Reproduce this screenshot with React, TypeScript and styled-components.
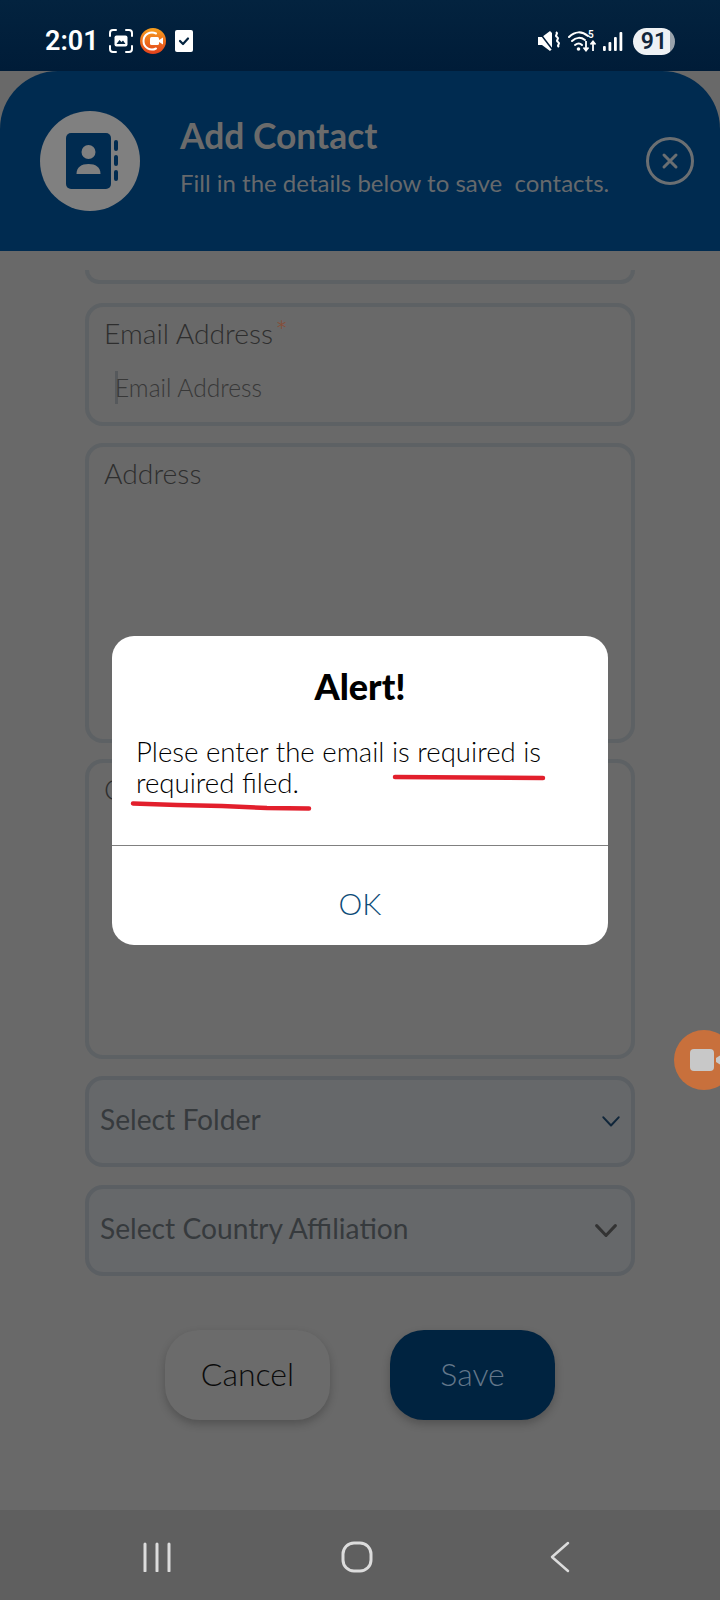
import React from "react";
import styled, { createGlobalStyle } from "styled-components";

const Global = createGlobalStyle`
  html, body { margin: 0; padding: 0; background: #696969; }
  * { box-sizing: border-box; }
`;
const Screen = styled.div`
  position: relative; width: 720px; height: 1600px; overflow: hidden;
  display: flex; flex-direction: column; background: #696969;
  font-family: "Lato", "Liberation Sans", sans-serif;
`;
const StatusBar = styled.div`
  height: 71px; flex: none; display: flex; align-items: center; justify-content: space-between;
  padding: 11px 45px 0 45px; background: linear-gradient(#03233f, #001c38);
`;
const StatusGroup = styled.div`display: flex; align-items: center;`;
const Clock = styled.span`
  font: 600 27px "Roboto", sans-serif; color: #fff; margin-right: 12px; width: 52px;
`;
const Battery = styled.div`
  width: 42px; height: 27px; border-radius: 14px; display: flex; align-items: center; justify-content: center;
  background: linear-gradient(90deg, #eef1f4 88%, #9aa3ac 88%);
  font: 600 23px "Roboto", sans-serif; color: #12263b; margin-left: 10px;
`;
const Header = styled.header`
  height: 180px; flex: none; background: #002b50; border-radius: 58px 58px 0 0;
  display: flex; align-items: flex-start; padding: 40px 26px 0 40px; position: relative;
`;
const Avatar = styled.div`
  width: 100px; height: 100px; border-radius: 50%; background: #808080; flex: none;
  display: flex; align-items: center; justify-content: center;
`;
const HeaderText = styled.div`
  margin-left: 40px; flex: 1; display: flex; flex-direction: column;
`;
const Title = styled.h1`
  margin: 4px 0 0; font: 700 35.4px/42px "Lato", sans-serif; color: #6b6b6b;
`;
const Subtitle = styled.p`
  margin: 11px 0 0; font: 400 24px/30px "Lato", sans-serif; color: #66696c; white-space: pre;
`;
const Close = styled.div`
  width: 48px; height: 48px; border-radius: 50%; border: 3px solid #6b6f72; flex: none; margin-top: 26px;
  display: flex; align-items: center; justify-content: center;
`;
const Form = styled.main`
  flex: 1; min-height: 0; display: flex; flex-direction: column; padding: 0 85px;
`;
const Field = styled.div<{ $h: number; $mt: number; $cut?: boolean }>`
  height: ${(p) => p.$h}px; margin-top: ${(p) => p.$mt}px; flex: none;
  border: 4px solid #5d6164; border-radius: 18px; padding: 9px 14px 0 15px;
  ${(p) => p.$cut && "border-top: 0; border-radius: 0 0 18px 18px;"}
`;
const Label = styled.div`
  font: 300 28.3px/34px "Lato", sans-serif; color: #2e2e2e; position: relative; width: max-content;
`;
const Star = styled.span`
  position: absolute; left: 100%; top: -3px; margin-left: 2px; font-size: 30px; color: #8a4b32;
`;
const InputRow = styled.div`
  display: flex; align-items: center; margin: 21px 0 0 11px; height: 33px;
`;
const Caret = styled.span`width: 3px; height: 33px; background: #56595c; flex: none;`;
const Placeholder = styled.span`
  font: 300 24.6px/33px "Lato", sans-serif; color: #383838; margin-left: -3px;
`;
const SelectField = styled.div<{ $mt: number; $chevRight: number }>`
  height: 91px; margin-top: ${(p) => p.$mt}px; flex: none;
  border: 4px solid #5b5f63; border-radius: 18px; background: #66686a;
  display: flex; align-items: center; justify-content: space-between;
  padding: 0 ${(p) => p.$chevRight}px 0 11px;
`;
const SelectText = styled.span`
  font: 400 28.2px/34px "Lato", sans-serif; color: #363a3d; margin-top: -5px;
`;
const Buttons = styled.div`
  display: flex; justify-content: center; gap: 60px; margin-top: 54px;
`;
const Button = styled.button<{ $primary?: boolean }>`
  width: 165px; height: 90px; border: 0; border-radius: 34px; padding: 0 0 4px;
  font: 300 32px "Lato", sans-serif;
  background: ${(p) => (p.$primary ? "#002340" : "#6b6b6b")};
  color: ${(p) => (p.$primary ? "#63778a" : "#0b0b0b")};
  box-shadow: 0 4px 8px rgba(0,0,0,.22);
`;
const NavBar = styled.nav`
  height: 90px; flex: none; background: #5f5f5f; display: flex; align-items: center;
  justify-content: space-between; padding: 3px 150px 0 143px;
`;
const Dialog = styled.div`
  position: absolute; left: 112px; top: 636px; width: 496px; height: 309px; border-radius: 22px;
  background: #fff; display: flex; flex-direction: column;
`;
const DialogTitle = styled.h2`
  margin: 28px 0 0; text-align: center; font: 900 36px/44px "Lato", sans-serif; color: #000;
`;
const DialogBody = styled.p`
  margin: 28px 0 0; padding: 0 24px; font: 300 27.6px/31px "Lato", sans-serif; color: #000;
  height: 80px;
`;
const Divider = styled.div`height: 1px; background: #808080; margin-top: 29px; flex: none;`;
const OkRow = styled.div`
  flex: 1; display: flex; align-items: center; justify-content: center;
  font: 300 30px "Lato", sans-serif; color: #0c4b78; padding-top: 14px;
`;
const Ink = styled.svg`
  position: absolute; left: 0; top: 0; width: 496px; height: 309px; overflow: visible; pointer-events: none;
`;
const Float = styled.div`
  position: absolute; left: 674px; top: 1030px; width: 60px; height: 60px; border-radius: 50%; background: #c8703c;
  display: flex; align-items: center; padding-left: 16px;
`;

const Chevron = ({ size, stroke, color }: { size: number; stroke: number; color: string }) => (
  <svg width={size} height={size * 0.62} viewBox="0 0 20 12.4" fill="none">
    <path d="M1.5 1.5 L10 10.5 L18.5 1.5" stroke={color} strokeWidth={(stroke * 20) / size} strokeLinecap="round" strokeLinejoin="round" />
  </svg>
);

export default function App() {
  return (
    <Screen>
      <Global />
      <StatusBar>
        <StatusGroup>
          <Clock>2:01</Clock>
          <svg width="24" height="24" viewBox="0 0 24 24" fill="none" style={{ marginRight: 6 }}>
            <path d="M1 7V4a3 3 0 0 1 3-3h3M17 1h3a3 3 0 0 1 3 3v3M23 17v3a3 3 0 0 1-3 3h-3M7 23H4a3 3 0 0 1-3-3v-3" stroke="#fff" strokeWidth="2" strokeLinecap="round" />
            <rect x="5.5" y="6.5" width="13" height="11" rx="2" fill="#fff" />
            <path d="M7.5 15l3-4 2 2 1.5-1.5 2.5 3.5z" fill="#03233f" />
          </svg>
          <svg width="28" height="28" viewBox="0 0 28 28" style={{ marginRight: 8 }}>
            <defs>
              <linearGradient id="rec" x1="0" y1="0" x2="0" y2="1">
                <stop offset="0" stopColor="#f7a01e" />
                <stop offset="1" stopColor="#e2401c" />
              </linearGradient>
            </defs>
            <circle cx="14" cy="14" r="13" fill="url(#rec)" />
            <path d="M17 6.5a8.5 8.5 0 1 0 0 15" stroke="#fff" strokeWidth="2" fill="none" strokeLinecap="round" />
            <rect x="11" y="10" width="9" height="8" rx="1.5" fill="#fff" />
            <path d="M20 13l4-2.5v7L20 15z" fill="#fff" />
          </svg>
          <svg width="18" height="22" viewBox="0 0 18 22">
            <rect width="18" height="22" rx="2" fill="#fff" />
            <path d="M5 11l3 3 5-5.5" stroke="#03233f" strokeWidth="2.2" fill="none" strokeLinecap="round" strokeLinejoin="round" />
          </svg>
        </StatusGroup>
        <StatusGroup>
          <svg width="22" height="20" viewBox="0 0 22 20" style={{ marginRight: 8 }}>
            <path d="M0 6h4l8-6 2 2v16l-2 2-8-6H0z" fill="#fff" />
            <path d="M1 1l13 17" stroke="#001c38" strokeWidth="1.5" />
            <path d="M18 1c3 2-2 3 1 5s-2 3 1 5-2 3 1 5" stroke="#fff" strokeWidth="2" fill="none" />
          </svg>
          <svg width="29" height="22" viewBox="0 0 29 22" fill="none" style={{ marginRight: 6 }}>
            <path d="M1 7c6-6 13-6 19-1" stroke="#fff" strokeWidth="2" strokeLinecap="round" />
            <path d="M4 11c4-4 9-4 13-1" stroke="#fff" strokeWidth="2" strokeLinecap="round" />
            <path d="M7 15c2.500-2 5-2 7 0" stroke="#fff" strokeWidth="2" strokeLinecap="round" />
            <circle cx="10.500" cy="19" r="1.800" fill="#fff" />
            <text x="20" y="8" fontFamily="Roboto, sans-serif" fontSize="10" fontWeight="600" fill="#fff">5</text>
            <path d="M18 11v9M15.500 17.500l2.500 3 2.500-3M25 21v-9M22.500 14.500l2.500-3 2.500 3" stroke="#fff" strokeWidth="1.800" />
          </svg>
          <svg width="20" height="19" viewBox="0 0 20 19" fill="#fff">
            <rect x="0" y="14" width="2.800" height="5" rx="1" />
            <rect x="5.500" y="10" width="2.800" height="9" rx="1" />
            <rect x="11" y="5" width="2.800" height="14" rx="1" />
            <rect x="16.500" y="0" width="2.800" height="19" rx="1" />
          </svg>
          <Battery>91</Battery>
        </StatusGroup>
      </StatusBar>
      <Header>
        <Avatar>
          <svg width="58" height="58" viewBox="0 0 58 58">
            <rect x="5" y="1" width="45" height="56" rx="5" fill="#002b50" />
            <circle cx="27.500" cy="20" r="7" fill="#808080" />
            <path d="M15.500 42c0-7 5-10 12-10s12 3 12 10z" fill="#808080" />
            <rect x="53" y="8" width="4" height="11" rx="2" fill="#002b50" />
            <rect x="53" y="23" width="4" height="11" rx="2" fill="#002b50" />
            <rect x="53" y="38" width="4" height="11" rx="2" fill="#002b50" />
          </svg>
        </Avatar>
        <HeaderText>
          <Title>Add Contact</Title>
          <Subtitle>{"Fill in the details below to save  contacts."}</Subtitle>
        </HeaderText>
        <Close>
          <svg width="18" height="18" viewBox="0 0 18 18">
            <path d="M3 3l12 12M15 3L3 15" stroke="#6b6f72" strokeWidth="3" strokeLinecap="round" />
          </svg>
        </Close>
      </Header>
      <Form>
        <Field $h={14} $mt={19} $cut />
        <Field $h={123} $mt={19}>
          <Label>
            Email Address<Star>*</Star>
          </Label>
          <InputRow>
            <Caret />
            <Placeholder>Email Address</Placeholder>
          </InputRow>
        </Field>
        <Field $h={300} $mt={17}>
          <Label>Address</Label>
        </Field>
        <Field $h={300} $mt={16}>
          <Label>Comments</Label>
        </Field>
        <SelectField $mt={17} $chevRight={11}>
          <SelectText>Select Folder</SelectText>
          <Chevron size={18} stroke={2} color="#10263a" />
        </SelectField>
        <SelectField $mt={18} $chevRight={14}>
          <SelectText>Select Country Affiliation</SelectText>
          <Chevron size={22} stroke={3} color="#333" />
        </SelectField>
        <Buttons>
          <Button>Cancel</Button>
          <Button $primary>Save</Button>
        </Buttons>
      </Form>
      <NavBar>
        <svg width="28" height="30" viewBox="0 0 28 30" stroke="#dcdcdc" strokeWidth="3" strokeLinecap="round">
          <path d="M2 2v27M14 2v27M26 2v27" />
        </svg>
        <svg width="32" height="32" viewBox="0 0 32 32" fill="none" style={{ marginRight: 7 }}>
          <rect x="2" y="2" width="28" height="28" rx="11" stroke="#dcdcdc" strokeWidth="3" />
        </svg>
        <svg width="20" height="32" viewBox="0 0 20 32" fill="none">
          <path d="M18 2L2 16l16 14" stroke="#dcdcdc" strokeWidth="2.500" strokeLinecap="round" strokeLinejoin="round" />
        </svg>
      </NavBar>
      <Float>
        <svg width="44" height="24" viewBox="0 0 44 24">
          <rect x="0" y="1" width="24" height="22" rx="4" fill="#c8c8c8" />
          <path d="M26 10l8-5v14l-8-5z" fill="#c8c8c8" />
        </svg>
      </Float>
      <Dialog>
        <DialogTitle>Alert!</DialogTitle>
        <DialogBody>Plese enter the email is required is required filed.</DialogBody>
        <Divider />
        <OkRow>OK</OkRow>
        <Ink viewBox="0 0 496 309">
          <path d="M283 141L357 141.500L431 142" stroke="#e21f2c" strokeWidth="4.500" strokeLinecap="round" fill="none" />
          <path d="M21 167.500L65 169L110 170L155 172L197 172.500" stroke="#e21f2c" strokeWidth="4.500" strokeLinecap="round" fill="none" />
        </Ink>
      </Dialog>
    </Screen>
  );
}
